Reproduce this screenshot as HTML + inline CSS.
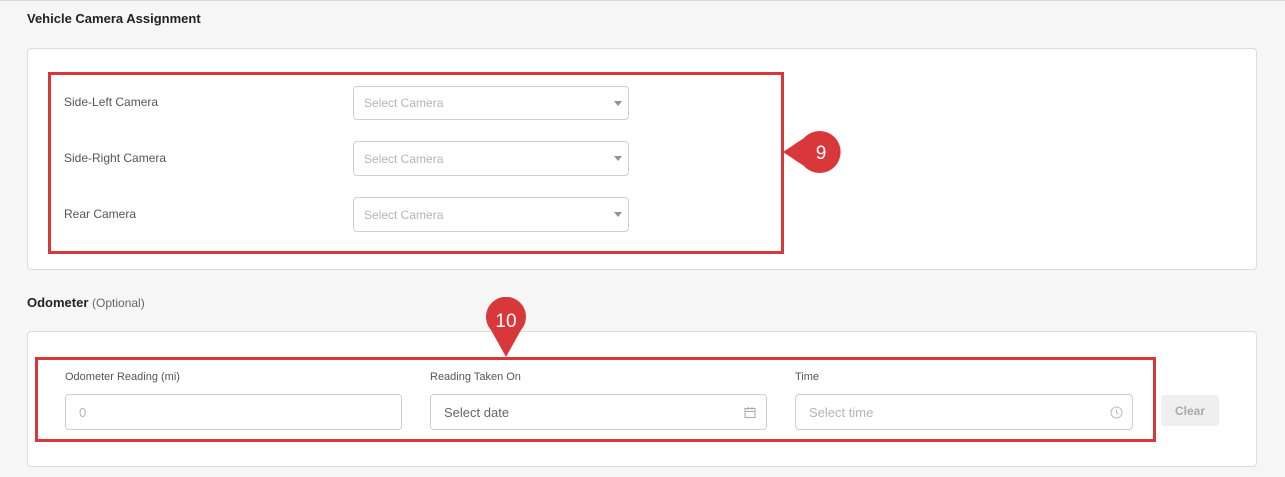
<!DOCTYPE html>
<html><head><style>
*{box-sizing:border-box;margin:0;padding:0}
body{width:1285px;height:477px;background:#f6f6f6;font-family:"Liberation Sans",Arial,sans-serif;position:relative;overflow:hidden}
.a{position:absolute}
.card{background:#fff;border:1px solid #dcdcdc;border-radius:4px}
.red{border:3px solid #d9383a}
.lbl{font-size:12px;color:#555}
.inp{background:#fff;border:1px solid #cfcfcf;border-radius:4px;font-size:12px;color:#b5b5b5;padding-left:10px;display:flex;align-items:center}
.sel .arr{position:absolute;right:6px;top:14px;border-left:4px solid transparent;border-right:4px solid transparent;border-top:5px solid #8a94a0}
.inp2{font-size:13px;padding-left:13px}
</style></head><body>
<div class="a" style="left:0;top:0;width:1285px;height:1px;background:#d9d9d9"></div>
<div class="a" style="left:27px;top:11px;font-size:13px;font-weight:bold;color:#222">Vehicle Camera Assignment</div>
<div class="a card" style="left:27px;top:48px;width:1230px;height:222px"></div>
<div class="a red" style="left:48px;top:72px;width:736px;height:182px"></div>
<div class="a lbl" style="left:64px;top:95px">Side-Left Camera</div>
<div class="a lbl" style="left:64px;top:151px">Side-Right Camera</div>
<div class="a lbl" style="left:64px;top:207px">Rear Camera</div>
<div class="a inp sel" style="left:353px;top:86px;width:276px;height:34px">Select Camera<span class="arr"></span></div>
<div class="a inp sel" style="left:353px;top:141px;width:276px;height:35px">Select Camera<span class="arr"></span></div>
<div class="a inp sel" style="left:353px;top:197px;width:276px;height:35px">Select Camera<span class="arr"></span></div>
<svg class="a" style="left:780px;top:127px" width="70" height="50"><path d="M3 25 L24 11 A21 21 0 1 1 24 39 Z" fill="#d9383a"/><text x="41" y="32" font-size="19" fill="#fff" font-family="Liberation Sans" text-anchor="middle">9</text></svg>
<div class="a" style="left:27px;top:295px;font-size:13px;color:#222"><b>Odometer</b> <span style="color:#666;font-size:12px">(Optional)</span></div>
<div class="a card" style="left:27px;top:331px;width:1230px;height:136px"></div>
<div class="a red" style="left:35px;top:357px;width:1121px;height:85px"></div>
<svg class="a" style="left:484px;top:297px" width="44" height="62"><path d="M22 60 L7 33 A20 20 0 1 1 37 33 Z" fill="#d9383a"/><text x="22" y="30" font-size="19" fill="#fff" font-family="Liberation Sans" text-anchor="middle">10</text></svg>
<div class="a lbl" style="left:65px;top:371px;font-size:11px">Odometer Reading (mi)</div>
<div class="a lbl" style="left:430px;top:371px;font-size:11px">Reading Taken On</div>
<div class="a lbl" style="left:795px;top:371px;font-size:11px">Time</div>
<div class="a inp inp2" style="left:65px;top:394px;width:337px;height:36px">0</div>
<div class="a inp inp2" style="left:430px;top:394px;width:337px;height:36px;color:#666">Select date
<svg class="a" style="right:10px;top:11px" width="12" height="12"><rect x="1" y="2.5" width="10" height="9" fill="none" stroke="#aaa"/><path d="M1 5.5H11M4 1V4M8 1V4" stroke="#aaa"/></svg></div>
<div class="a inp inp2" style="left:795px;top:394px;width:338px;height:36px">Select time
<svg class="a" style="right:9px;top:11px" width="13" height="13"><circle cx="6.5" cy="6.5" r="5.5" fill="none" stroke="#bbb"/><path d="M6.5 3.5V6.5L8.5 8.5" fill="none" stroke="#bbb"/></svg></div>
<div class="a" style="left:1161px;top:395px;width:58px;height:31px;background:#efefef;border-radius:3px;font-size:12px;font-weight:bold;color:#aaa;display:flex;align-items:center;justify-content:center">Clear</div>
</body></html>
